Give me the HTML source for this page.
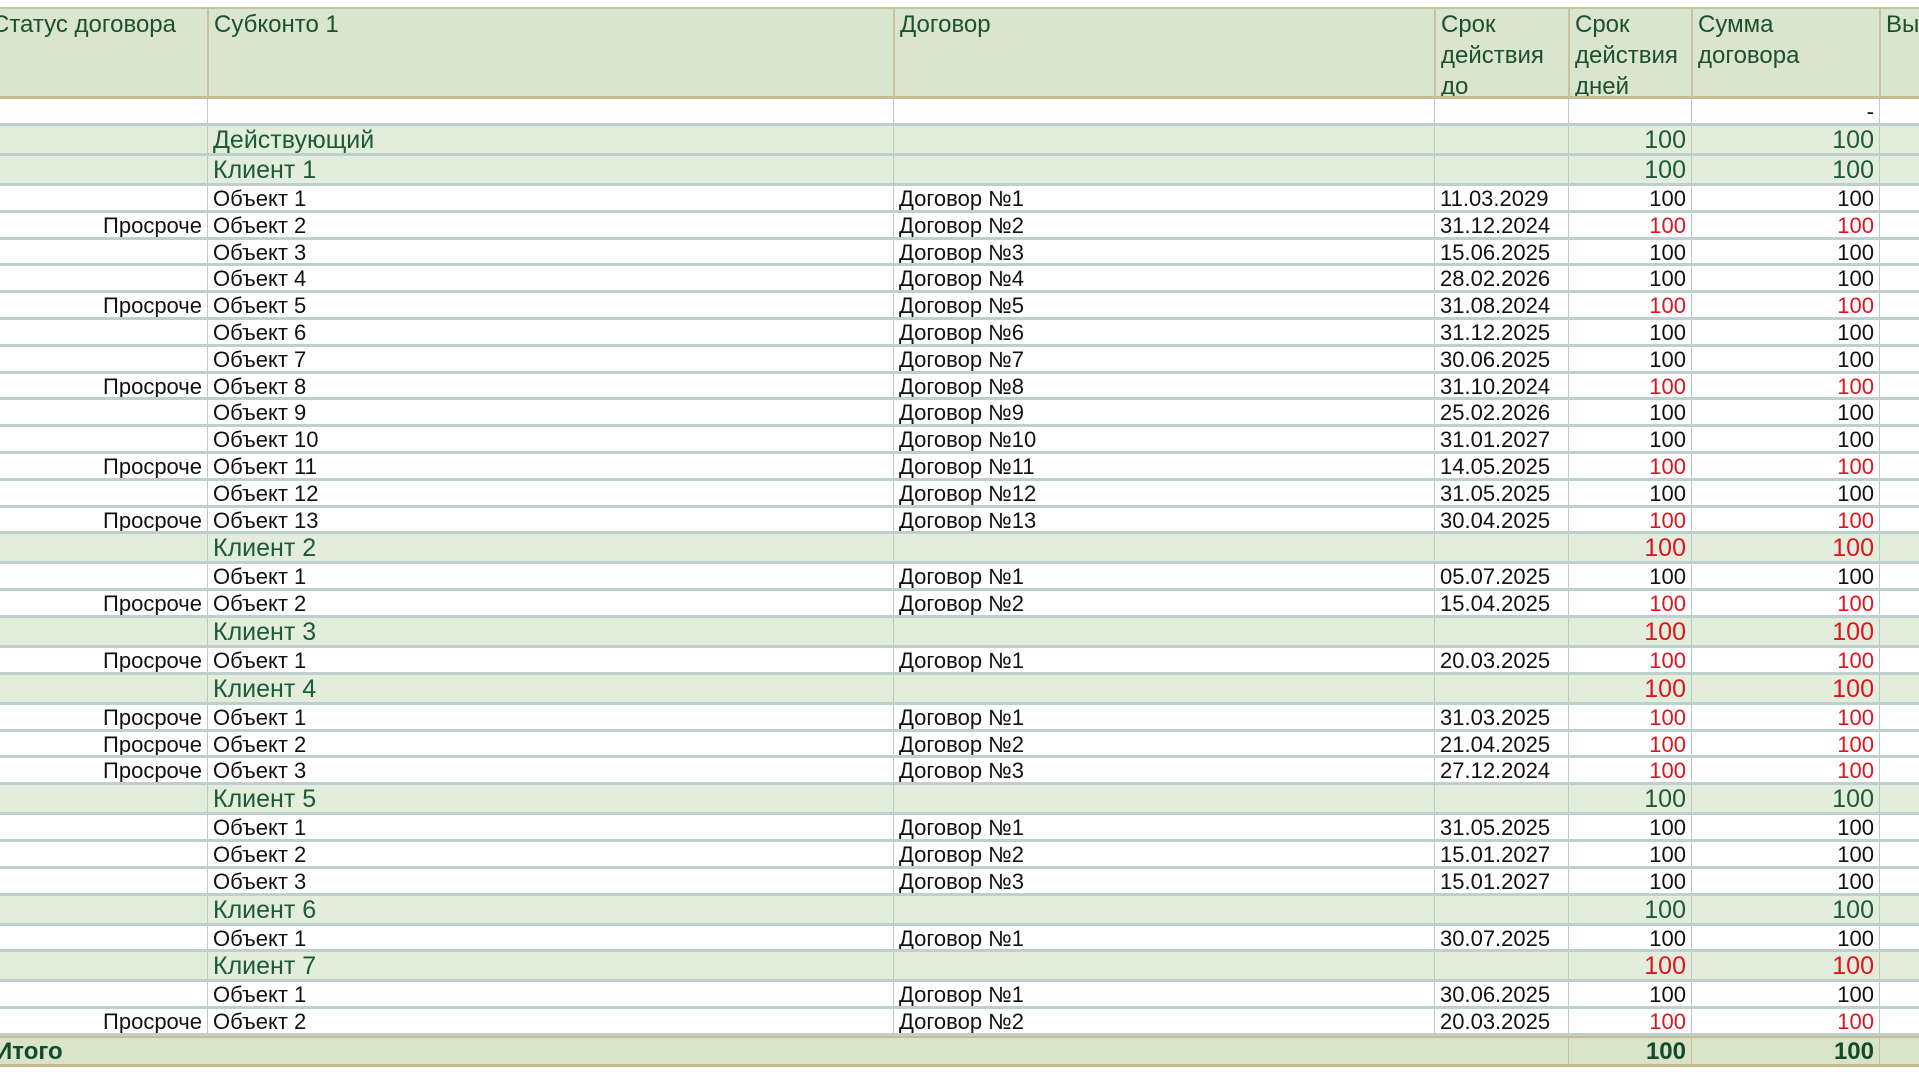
<!DOCTYPE html>
<html><head><meta charset="utf-8">
<style>
*{box-sizing:border-box;margin:0;padding:0}
body{width:1919px;height:1079px;background:#fff;overflow:hidden;font-family:"Liberation Sans",sans-serif;position:relative}
#t{position:absolute;left:-40px;top:7px;width:2000px}
.r{display:flex;border-bottom:3px solid #bed0cd;font-size:22px;color:#111}
.r>div{border-left:1px solid #b6ccc8;padding:0 5px;overflow:hidden;white-space:nowrap}
.r>div:first-child{border-left:none}
.c0{width:247px;text-align:right}
.c1{width:686px}
.c2{width:541px}
.c3{width:134px}
.c4{width:123px;text-align:right}
.c5{width:188px;text-align:right}
.c6{width:81px}
.h{height:92px;background:#d9e5cd;border-bottom:3px solid #c4bd96;color:#1d4f33;font-size:24px;line-height:31px;border-top:2px solid #c8c3a0}
.r.h>div{border-left:2px solid #c8c0a0;padding-top:0;white-space:normal}
.r.h>div:first-child{border-left:none;text-align:left;padding-left:32px;white-space:nowrap}
.h .c4,.h .c5{text-align:left}
.b{height:27px;line-height:26px}
.o{height:26.8px;line-height:25px}
.g{height:30px;line-height:29px;background:#e2eedb;color:#1d5a3a;font-size:25px}
.red{color:#e0141e}
.tot{height:31px;line-height:28px;background:#d8e3c8;border-top:2px solid #c4bd96;border-bottom:3px solid #c4bd96;color:#124a2c;font-weight:bold;font-size:24px}
.tot>div{border-left:1px solid #c8c0a0}
</style></head><body>
<div id="t">
<div class="r h"><div class="c0">Статус договора</div><div class="c1">Субконто 1</div><div class="c2">Договор</div><div class="c3">Срок действия до</div><div class="c4">Срок действия дней</div><div class="c5">Сумма договора</div><div class="c6">Вы</div></div>
<div class="r b"><div class="c0"></div><div class="c1"></div><div class="c2"></div><div class="c3"></div><div class="c4"></div><div class="c5">-</div><div class="c6"></div></div>
<div class="r g"><div class="c0"></div><div class="c1">Действующий</div><div class="c2"></div><div class="c3"></div><div class="c4">100</div><div class="c5">100</div><div class="c6"></div></div>
<div class="r g"><div class="c0"></div><div class="c1">Клиент 1</div><div class="c2"></div><div class="c3"></div><div class="c4">100</div><div class="c5">100</div><div class="c6"></div></div>
<div class="r o"><div class="c0"></div><div class="c1">Объект 1</div><div class="c2">Договор №1</div><div class="c3">11.03.2029</div><div class="c4">100</div><div class="c5">100</div><div class="c6"></div></div>
<div class="r o"><div class="c0">Просроче</div><div class="c1">Объект 2</div><div class="c2">Договор №2</div><div class="c3">31.12.2024</div><div class="c4 red">100</div><div class="c5 red">100</div><div class="c6"></div></div>
<div class="r o"><div class="c0"></div><div class="c1">Объект 3</div><div class="c2">Договор №3</div><div class="c3">15.06.2025</div><div class="c4">100</div><div class="c5">100</div><div class="c6"></div></div>
<div class="r o"><div class="c0"></div><div class="c1">Объект 4</div><div class="c2">Договор №4</div><div class="c3">28.02.2026</div><div class="c4">100</div><div class="c5">100</div><div class="c6"></div></div>
<div class="r o"><div class="c0">Просроче</div><div class="c1">Объект 5</div><div class="c2">Договор №5</div><div class="c3">31.08.2024</div><div class="c4 red">100</div><div class="c5 red">100</div><div class="c6"></div></div>
<div class="r o"><div class="c0"></div><div class="c1">Объект 6</div><div class="c2">Договор №6</div><div class="c3">31.12.2025</div><div class="c4">100</div><div class="c5">100</div><div class="c6"></div></div>
<div class="r o"><div class="c0"></div><div class="c1">Объект 7</div><div class="c2">Договор №7</div><div class="c3">30.06.2025</div><div class="c4">100</div><div class="c5">100</div><div class="c6"></div></div>
<div class="r o"><div class="c0">Просроче</div><div class="c1">Объект 8</div><div class="c2">Договор №8</div><div class="c3">31.10.2024</div><div class="c4 red">100</div><div class="c5 red">100</div><div class="c6"></div></div>
<div class="r o"><div class="c0"></div><div class="c1">Объект 9</div><div class="c2">Договор №9</div><div class="c3">25.02.2026</div><div class="c4">100</div><div class="c5">100</div><div class="c6"></div></div>
<div class="r o"><div class="c0"></div><div class="c1">Объект 10</div><div class="c2">Договор №10</div><div class="c3">31.01.2027</div><div class="c4">100</div><div class="c5">100</div><div class="c6"></div></div>
<div class="r o"><div class="c0">Просроче</div><div class="c1">Объект 11</div><div class="c2">Договор №11</div><div class="c3">14.05.2025</div><div class="c4 red">100</div><div class="c5 red">100</div><div class="c6"></div></div>
<div class="r o"><div class="c0"></div><div class="c1">Объект 12</div><div class="c2">Договор №12</div><div class="c3">31.05.2025</div><div class="c4">100</div><div class="c5">100</div><div class="c6"></div></div>
<div class="r o"><div class="c0">Просроче</div><div class="c1">Объект 13</div><div class="c2">Договор №13</div><div class="c3">30.04.2025</div><div class="c4 red">100</div><div class="c5 red">100</div><div class="c6"></div></div>
<div class="r g"><div class="c0"></div><div class="c1">Клиент 2</div><div class="c2"></div><div class="c3"></div><div class="c4 red">100</div><div class="c5 red">100</div><div class="c6"></div></div>
<div class="r o"><div class="c0"></div><div class="c1">Объект 1</div><div class="c2">Договор №1</div><div class="c3">05.07.2025</div><div class="c4">100</div><div class="c5">100</div><div class="c6"></div></div>
<div class="r o"><div class="c0">Просроче</div><div class="c1">Объект 2</div><div class="c2">Договор №2</div><div class="c3">15.04.2025</div><div class="c4 red">100</div><div class="c5 red">100</div><div class="c6"></div></div>
<div class="r g"><div class="c0"></div><div class="c1">Клиент 3</div><div class="c2"></div><div class="c3"></div><div class="c4 red">100</div><div class="c5 red">100</div><div class="c6"></div></div>
<div class="r o"><div class="c0">Просроче</div><div class="c1">Объект 1</div><div class="c2">Договор №1</div><div class="c3">20.03.2025</div><div class="c4 red">100</div><div class="c5 red">100</div><div class="c6"></div></div>
<div class="r g"><div class="c0"></div><div class="c1">Клиент 4</div><div class="c2"></div><div class="c3"></div><div class="c4 red">100</div><div class="c5 red">100</div><div class="c6"></div></div>
<div class="r o"><div class="c0">Просроче</div><div class="c1">Объект 1</div><div class="c2">Договор №1</div><div class="c3">31.03.2025</div><div class="c4 red">100</div><div class="c5 red">100</div><div class="c6"></div></div>
<div class="r o"><div class="c0">Просроче</div><div class="c1">Объект 2</div><div class="c2">Договор №2</div><div class="c3">21.04.2025</div><div class="c4 red">100</div><div class="c5 red">100</div><div class="c6"></div></div>
<div class="r o"><div class="c0">Просроче</div><div class="c1">Объект 3</div><div class="c2">Договор №3</div><div class="c3">27.12.2024</div><div class="c4 red">100</div><div class="c5 red">100</div><div class="c6"></div></div>
<div class="r g"><div class="c0"></div><div class="c1">Клиент 5</div><div class="c2"></div><div class="c3"></div><div class="c4">100</div><div class="c5">100</div><div class="c6"></div></div>
<div class="r o"><div class="c0"></div><div class="c1">Объект 1</div><div class="c2">Договор №1</div><div class="c3">31.05.2025</div><div class="c4">100</div><div class="c5">100</div><div class="c6"></div></div>
<div class="r o"><div class="c0"></div><div class="c1">Объект 2</div><div class="c2">Договор №2</div><div class="c3">15.01.2027</div><div class="c4">100</div><div class="c5">100</div><div class="c6"></div></div>
<div class="r o"><div class="c0"></div><div class="c1">Объект 3</div><div class="c2">Договор №3</div><div class="c3">15.01.2027</div><div class="c4">100</div><div class="c5">100</div><div class="c6"></div></div>
<div class="r g"><div class="c0"></div><div class="c1">Клиент 6</div><div class="c2"></div><div class="c3"></div><div class="c4">100</div><div class="c5">100</div><div class="c6"></div></div>
<div class="r o"><div class="c0"></div><div class="c1">Объект 1</div><div class="c2">Договор №1</div><div class="c3">30.07.2025</div><div class="c4">100</div><div class="c5">100</div><div class="c6"></div></div>
<div class="r g"><div class="c0"></div><div class="c1">Клиент 7</div><div class="c2"></div><div class="c3"></div><div class="c4 red">100</div><div class="c5 red">100</div><div class="c6"></div></div>
<div class="r o"><div class="c0"></div><div class="c1">Объект 1</div><div class="c2">Договор №1</div><div class="c3">30.06.2025</div><div class="c4">100</div><div class="c5">100</div><div class="c6"></div></div>
<div class="r o"><div class="c0">Просроче</div><div class="c1">Объект 2</div><div class="c2">Договор №2</div><div class="c3">20.03.2025</div><div class="c4 red">100</div><div class="c5 red">100</div><div class="c6"></div></div>
<div class="r tot"><div style="width:1608px;text-align:left;padding-left:35px">Итого</div><div class="c4">100</div><div class="c5">100</div><div class="c6"></div></div>
</div>
</body></html>
